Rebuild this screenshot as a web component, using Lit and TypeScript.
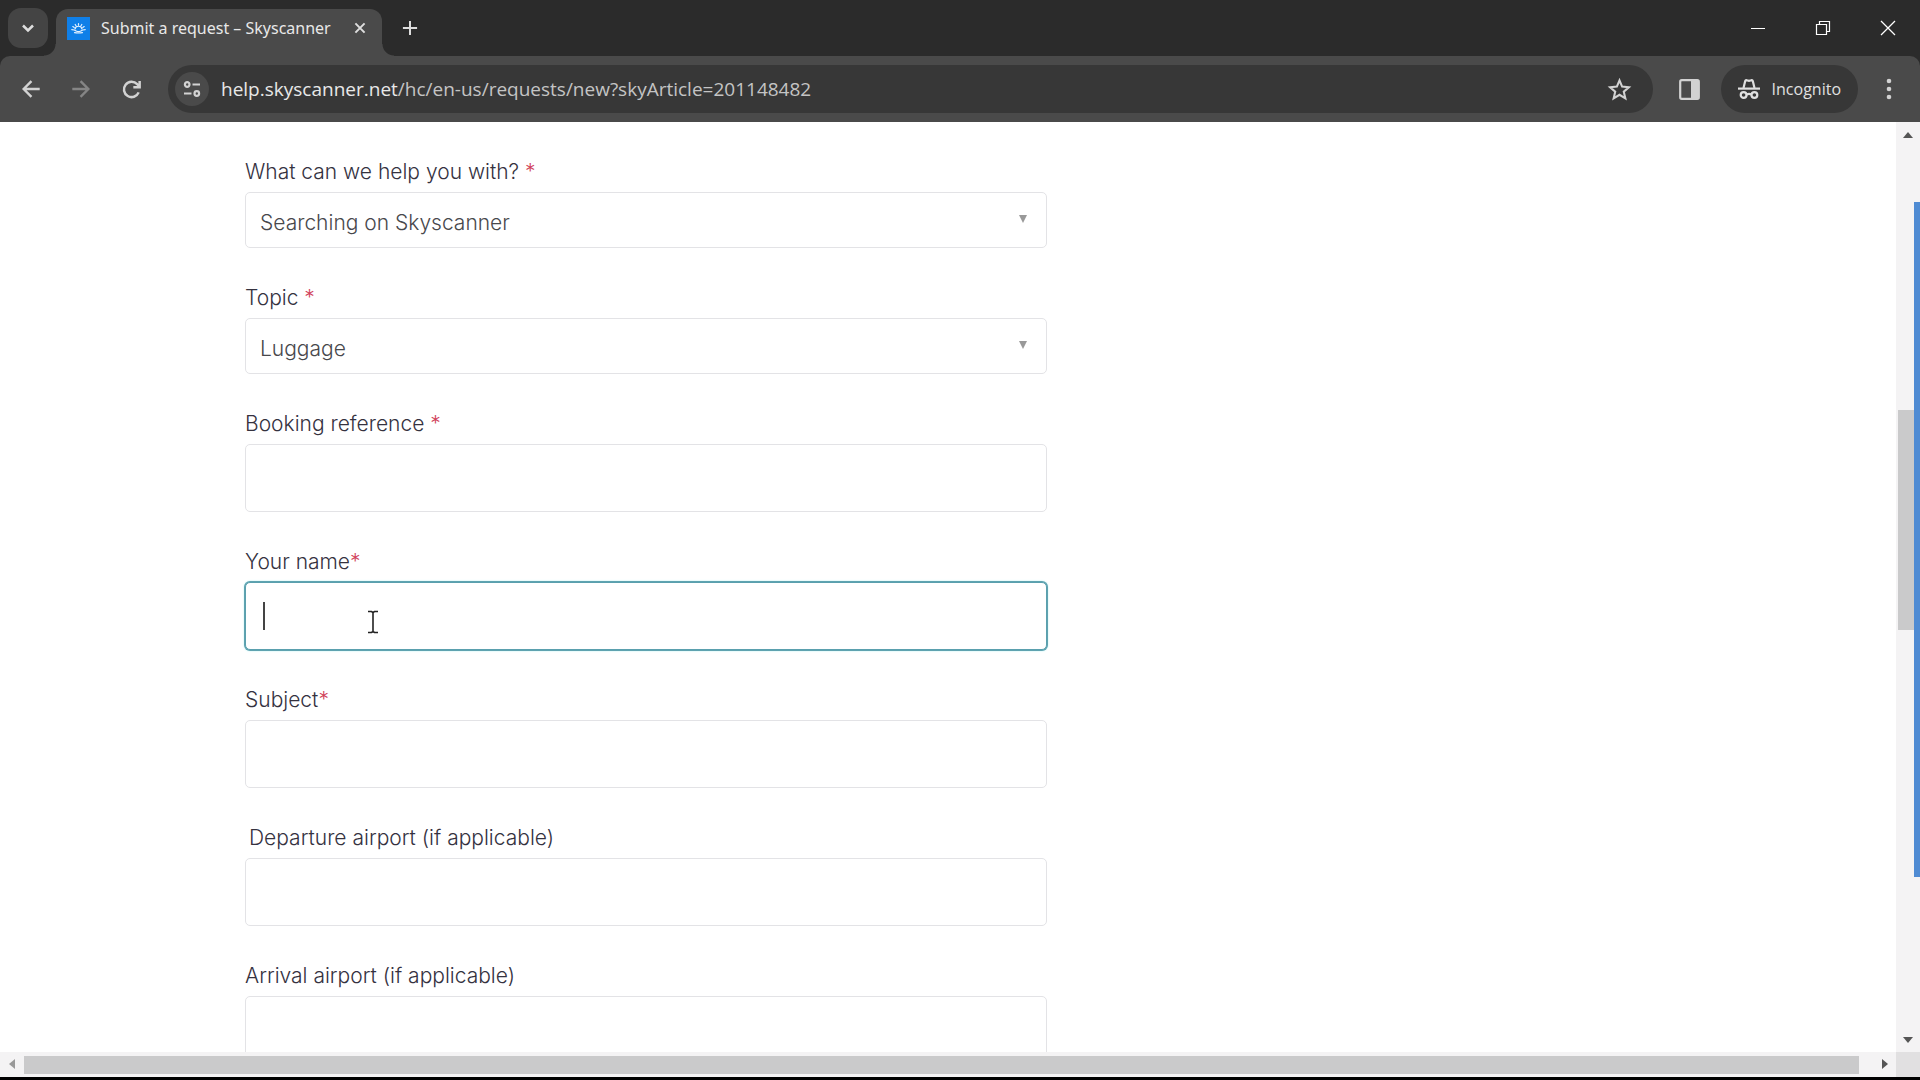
import { LitElement, html, css, svg, nothing } from "lit";
import { customElement, property } from "lit/decorators.js";

interface Field {
  id: string;
  label: string;
  required?: boolean;
  spaced?: boolean;
  indent?: boolean;
  options?: string[];
  focused?: boolean;
}

const FIELDS: Field[] = [
  { id: "help", label: "What can we help you with?", required: true, spaced: true, options: ["Searching on Skyscanner"] },
  { id: "topic", label: "Topic", required: true, spaced: true, options: ["Luggage"] },
  { id: "booking", label: "Booking reference", required: true, spaced: true },
  { id: "name", label: "Your name", required: true, focused: true },
  { id: "subject", label: "Subject", required: true },
  { id: "departure", label: "Departure airport (if applicable)", indent: true },
  { id: "arrival", label: "Arrival airport (if applicable)" },
];

const stroke = (size: number, d: string, width = 2) => html`<svg width=${size} height=${size} viewBox="0 0 24 24" fill="none"
  stroke="currentColor" stroke-width=${width} aria-hidden="true">${svg`<path d=${d}></path>`}</svg>`;

@customElement("browser-tabs")
class BrowserTabs extends LitElement {
  static styles = css`
    :host { display: flex; align-items: stretch; height: 56px; background: #2b2b2b; color: #dedede; }
    button { border: 0; padding: 0; background: none; color: inherit; display: grid; place-items: center; }
    svg { display: block; }
    .search { width: 40px; height: 40px; margin: 8px 8px 0; border-radius: 13px; background: #444; }
    .tab { position: relative; display: flex; align-items: center; box-sizing: border-box; width: 326px; margin-top: 9px;
      padding: 0 12px 9px 11px; background: #4a4a4a; border-radius: 12px 12px 0 0; }
    .tab::before, .tab::after { content: ""; position: absolute; bottom: 0; width: 12px; height: 12px; }
    .tab::before { right: 100%; background: radial-gradient(circle at 0 0, transparent 11px, #4a4a4a 12px); }
    .tab::after { left: 100%; background: radial-gradient(circle at 100% 0, transparent 11px, #4a4a4a 12px); }
    .title { flex: 1; margin-left: 11px; font-size: 16px; line-height: 24px; white-space: nowrap; color: #e8e8e8; }
    .close { width: 20px; height: 24px; }
    .plus { width: 56px; height: 56px; }
    .window { display: flex; margin-left: auto; color: #fff; }
    .window button { width: 65px; height: 56px; }
  `;

  render() {
    return html`
      <button class="search" aria-label="Search tabs">${stroke(20, "M6 9l6 6 6-6", 3)}</button>
      <div class="tab">
        <svg width="23" height="23" viewBox="0 0 23 23" aria-hidden="true">
          <rect width="23" height="23" fill="#0f7fe8"></rect>
          <g fill="none" stroke="#e4f1ff" stroke-width="1.2" stroke-linecap="round">
            <path d="M8 12a3.600 3.600 0 0 1 7 0M11.500 6.500v1.600M8.200 7.500l.8 1.300M14.800 7.500l-.8 1.300M5.800 9.600l1.400.9M17.200 9.600l-1.400.9"></path>
            <path d="M4.800 12.600q2.600.1 4.400 1.400 2.300 1.400 4.600 0 1.800-1.300 4.400-1.400M7.500 15.600q4 .8 8 0"></path>
          </g>
        </svg>
        <span class="title">Submit a request – Skyscanner</span>
        <button class="close" aria-label="Close tab">${stroke(20, "M6.500 6.500l11 11M17.500 6.500l-11 11", 2.4)}</button>
      </div>
      <button class="plus" aria-label="New tab">${stroke(20, "M12 3.500v17M3.500 12h17", 2.4)}</button>
      <div class="window">
        <button aria-label="Minimize"><svg width="16" height="16"><path d="M1 8.500h14" stroke="currentColor"></path></svg></button>
        <button aria-label="Restore"><svg width="16" height="16" fill="none" stroke="currentColor" stroke-width="1.200">
          <path d="M1.500 4.500h10v10h-10zM4.500 4.500v-3h10v10h-3"></path></svg></button>
        <button aria-label="Close"><svg width="16" height="16" stroke="currentColor" stroke-width="1.300">
          <path d="M1 1l14 14M15 1L1 15"></path></svg></button>
      </div>
    `;
  }
}

@customElement("browser-toolbar")
class BrowserToolbar extends LitElement {
  static styles = css`
    :host { display: block; background: #2b2b2b; color: #d2d2d2; font-family: "Open Sans", "Noto Sans", sans-serif; }
    .bar { display: flex; align-items: center; height: 66px; padding: 0 6px; background: #4a4a4a; border-radius: 10px 10px 0 0; }
    button { border: 0; padding: 0; background: none; color: inherit; font: inherit; display: grid; place-items: center; flex: none; }
    svg { display: block; }
    .tool { width: 50px; height: 48px; }
    .off { color: #858585; }
    .address { flex: 1; min-width: 0; display: flex; align-items: center; height: 48px; margin: 0 12px; border-radius: 24px; background: #373737; }
    .site { width: 34px; height: 34px; margin-left: 7px; border-radius: 50%; background: #4a4a4a; }
    .url { flex: 1; min-width: 0; margin-left: 12px; font-size: 19px; line-height: 28px; white-space: nowrap; color: #c4c4c4; }
    .host { color: #e8e8e8; }
    .star { width: 66px; height: 48px; }
    .pill { display: flex; align-items: center; gap: 12px; height: 48px; margin: 0 6px; padding: 0 17px; border-radius: 24px; background: #373737; font-size: 16px; color: #e0e0e0; }
  `;

  render() {
    return html`
      <div class="bar">
        <button class="tool" aria-label="Back">${stroke(22, "M21.500 12H5M12.500 3.500L4 12l8.500 8.500", 2.6)}</button>
        <button class="tool off" aria-label="Forward">${stroke(22, "M2.500 12H19M11.500 3.500L20 12l-8.500 8.500", 2.6)}</button>
        <button class="tool" aria-label="Reload">${stroke(23, "M19.500 15a8 8 0 1 1-1.600-8.600L20.500 9M20.500 3v6.600h-6.600", 2.6)}</button>
        <div class="address">
          <button class="site" aria-label="View site information">
            <svg width="18" height="18" viewBox="0 0 18 18" fill="none" stroke="currentColor" stroke-width="2.200">
              <circle cx="4.200" cy="4.500" r="2.300"></circle><path d="M9.500 4.500H17M1 13.500h7.500"></path><circle cx="13.800" cy="13.500" r="2.300"></circle>
            </svg>
          </button>
          <span class="url"><span class="host">help.skyscanner.net</span>/hc/en-us/requests/new?skyArticle=201148482</span>
          <button class="star" aria-label="Bookmark this tab">${stroke(25, "M12 3.200l2.500 6 6.500.600-4.900 4.300 1.500 6.400-5.600-3.400-5.600 3.400 1.500-6.400L3 9.800l6.500-.600z")}</button>
        </div>
        <button class="tool" aria-label="Side panel">
          <svg width="21" height="21" viewBox="0 0 21 21"><rect x="1.200" y="1.200" width="18.600" height="18.600" rx="1.500" fill="none" stroke="currentColor" stroke-width="2.200"></rect><path d="M12 1h8v19h-8z" fill="currentColor"></path></svg>
        </button>
        <button class="pill">
          <svg width="22" height="22" viewBox="0 0 22 22" fill="none" stroke="currentColor" stroke-width="2.200">
            <path d="M0 10.600h22"></path>
            <path d="M5.500 10L7.200 3Q7.500 2 8.500 2.200L11 2.900l2.500-.700Q14.500 2 14.800 3L16.500 10"></path>
            <circle cx="5.600" cy="17" r="2.900"></circle><circle cx="16.400" cy="17" r="2.900"></circle>
            <path d="M8.500 16.600q2.500-1.500 5 0"></path>
          </svg>
          <span>Incognito</span>
        </button>
        <button class="tool" aria-label="Menu">
          <svg width="6" height="22" viewBox="0 0 6 22" fill="currentColor"><circle cx="3" cy="3" r="2.300"></circle><circle cx="3" cy="11" r="2.300"></circle><circle cx="3" cy="19" r="2.300"></circle></svg>
        </button>
      </div>
    `;
  }
}

@customElement("scroll-bar")
class ScrollBar extends LitElement {
  @property({ type: Boolean, reflect: true }) vertical = false;
  @property({ type: Number }) before = 0;
  @property({ type: Number }) size = 1;
  @property({ type: Number }) after = 0;

  static styles = css`
    :host { display: flex; height: 25px; background: #f4f3f4; color: #555; }
    :host([vertical]) { flex-direction: column; width: 24px; height: auto; }
    button { flex: none; width: 24px; height: 24px; padding: 0; border: 0; background: none; color: inherit; display: grid; place-items: center; }
    .start { color: #999; }
    :host([vertical]) .start { color: inherit; }
    .track { flex: 1; display: flex; padding: 4px 0 3px; }
    :host([vertical]) .track { flex-direction: column; padding: 0 4px 0 2px; }
    .thumb { background: #cacacb; }
  `;

  render() {
    const arrow = (d: string) => html`<svg width="10" height="10" fill="currentColor" aria-hidden="true">${svg`<path d=${d}></path>`}</svg>`;
    return html`
      <button class="start" aria-label="Scroll back">${arrow(this.vertical ? "M5 3l5 6H0z" : "M2 5l6-5v10z")}</button>
      <div class="track">
        <div style="flex:${this.before} 1 0"></div>
        <div class="thumb" style="flex:${this.size} 1 0"></div>
        <div style="flex:${this.after} 1 0"></div>
      </div>
      <button aria-label="Scroll forward">${arrow(this.vertical ? "M0 2h10L5 8z" : "M3 0l6 5-6 5z")}</button>
    `;
  }
}

@customElement("request-form")
class RequestForm extends LitElement {
  static styles = css`
    :host { display: block; }
    form { display: flex; flex-direction: column; gap: 36px; box-sizing: border-box; max-width: 802px; font-size: 21px; font-weight: 300; }
    .field { display: flex; flex-direction: column; gap: 6px; }
    label { line-height: 28px; color: #35323f; white-space: pre; }
    .indent { padding-left: 4px; }
    .star { color: #d1435b; }
    .control { position: relative; display: flex; }
    select, input { flex: 1; min-width: 0; box-sizing: border-box; margin: 0; border: 1px solid #e3e3e6; border-radius: 5px; outline: 0;
      background: #fff; color: #48484c; font: inherit; appearance: none; }
    select { height: 56px; padding: 4px 40px 0 14px; }
    input { height: 68px; padding: 0 17px; caret-color: transparent; }
    .focused { border-color: #5aa0ae; box-shadow: 0 0 0 1px #5fa3b0, 0 0 2px 1px #b8f1f4; }
    .arrow { position: absolute; right: 20px; top: 23px; width: 8px; height: 8px; fill: #999; pointer-events: none; }
    .caret { position: absolute; left: 18px; top: 20px; width: 2px; height: 28px; background: #444; }
    .pointer { position: absolute; left: 122px; top: 28px; }
  `;

  private control(f: Field) {
    if (f.options) {
      return html`<select id=${f.id}>${f.options.map((o) => html`<option>${o}</option>`)}</select>
        <svg class="arrow" viewBox="0 0 8 8" aria-hidden="true"><path d="M0 0h8L4 8z"></path></svg>`;
    }
    return html`<input id=${f.id} type="text" class=${f.focused ? "focused" : ""}>
      ${f.focused
        ? html`<span class="caret"></span>
            <svg class="pointer" width="12" height="24" viewBox="0 0 12 24" fill="none" stroke="#222" stroke-width="1.600" aria-hidden="true">
              <path d="M1 1.500h3.500L6 2.500l1.500-1H11M1 22.500h3.500l1.500-1 1.500 1H11M6 2.500v19"></path></svg>`
        : nothing}`;
  }

  render() {
    return html`<form>
      ${FIELDS.map((f) => html`<div class="field">
        <label class=${f.indent ? "indent" : ""} for=${f.id}>${f.label}${f.spaced ? " " : ""}${f.required ? html`<span class="star">*</span>` : nothing}</label>
        <div class="control">${this.control(f)}</div>
      </div>`)}
    </form>`;
  }
}

@customElement("app-root")
class AppRoot extends LitElement {
  static styles = css`
    :host { display: flex; flex-direction: column; box-sizing: border-box; height: 100vh; overflow: hidden; background: #fff;
      border-bottom: 3px solid #000; font-family: "Noto Sans", "Open Sans", sans-serif; }
    .view { position: relative; flex: 1; min-height: 0; display: flex; }
    .page { flex: 1; min-width: 0; overflow: hidden; padding: 36px 24px 0 245px; font-family: Inter, sans-serif; }
    .strip { position: absolute; right: 0; top: 8.6%; height: 72.6%; width: 6px; background: #4f8bd3; }
    .foot { display: flex; }
    .foot scroll-bar { flex: 1; }
    .corner { width: 24px; background: #e1e0e1; }
  `;

  render() {
    return html`
      <browser-tabs></browser-tabs>
      <browser-toolbar></browser-toolbar>
      <div class="view">
        <main class="page"><request-form></request-form></main>
        <scroll-bar vertical before="264" size="220" after="398"></scroll-bar>
        <div class="strip"></div>
      </div>
      <div class="foot">
        <scroll-bar before="0" size="1835" after="13"></scroll-bar>
        <div class="corner"></div>
      </div>
    `;
  }
}
